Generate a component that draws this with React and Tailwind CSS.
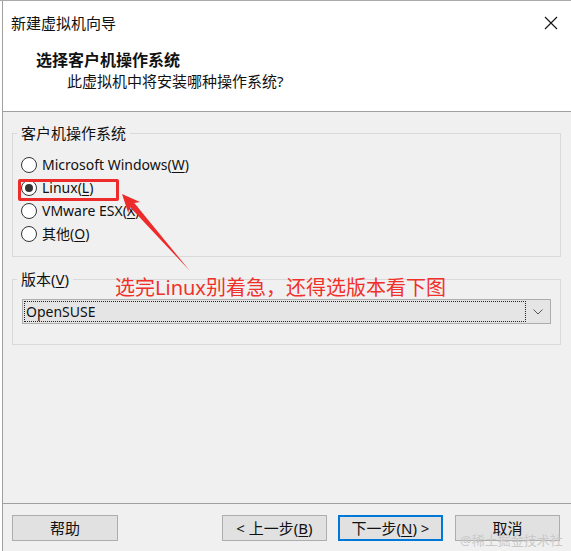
import React, { useState } from "react";

const OS_OPTIONS = [
  { id: "win", label: "Microsoft Windows(", key: "W" },
  { id: "linux", label: "Linux(", key: "L" },
  { id: "esx", label: "VMware ESX(", key: "X" },
  { id: "other", label: "其他(", key: "O" },
];

function Radio({ checked }) {
  return (
    <span className="flex h-[16px] w-[16px] shrink-0 items-center justify-center rounded-full border border-[#333] bg-white">
      {checked ? <span className="h-[8px] w-[8px] rounded-full bg-[#333]" /> : null}
    </span>
  );
}

function WinButton({ children, primary }) {
  return (
    <button
      type="button"
      className={`flex h-[26px] w-full items-center justify-center bg-[#e1e1e1] text-[15px] text-[#111] ${
        primary ? "border-2 border-[#0078d7]" : "border border-[#adadad]"
      }`}
    >
      {children}
    </button>
  );
}

export default function App() {
  const [os, setOs] = useState("linux");

  return (
    <div
      className="relative flex h-[551px] w-[571px] overflow-hidden border-t border-[#a9a9a9] bg-white text-[#111]"
      style={{ fontFamily: '"Noto Sans", "Noto Sans CJK SC", sans-serif' }}
    >
      <div className="ml-[2px] flex flex-1 flex-col border-l border-[#a0a0a0]">
        {/* title bar + header */}
        <div className="flex h-[43px] items-center justify-between pl-[8px] pr-[13px]">
          <span className="text-[15px] leading-5">新建虚拟机向导</span>
          <svg width="14" height="14" viewBox="0 0 14 14" className="text-[#111]">
            <path d="M1 1 L13 13 M13 1 L1 13" stroke="currentColor" strokeWidth="1.1" />
          </svg>
        </div>
        <div className="flex h-[68px] flex-col border-b border-[#a0a0a0] pl-[33px] pt-[6px]">
          <span className="text-[16px] font-bold leading-5">选择客户机操作系统</span>
          <span className="mt-[1px] pl-[31px] text-[15px] leading-5">此虚拟机中将安装哪种操作系统?</span>
        </div>

        {/* body */}
        <div className="flex flex-1 flex-col bg-[#f0f0f0] pl-[9px] pr-[10px] pt-[11px]">
          <fieldset className="border border-[#d9d9d9] pb-[11px] pl-[8px] pt-[10px]">
            <legend className="-ml-[4px] px-[4px] text-[15px] leading-5">客户机操作系统</legend>
            {OS_OPTIONS.map((opt) => (
              <label
                key={opt.id}
                className="flex h-[23px] cursor-default items-center gap-[5px] text-[14px]"
                onClick={() => setOs(opt.id)}
              >
                <Radio checked={os === opt.id} />
                <span>
                  {opt.label}
                  <span className="underline underline-offset-2">{opt.key}</span>)
                </span>
              </label>
            ))}
          </fieldset>

          <fieldset className="mt-[12px] border border-[#d9d9d9] pb-[20px] pl-[9px] pr-[9px] pt-[10px]">
            <legend className="-ml-[5px] px-[4px] text-[15px] leading-5">
              版本(<span className="underline underline-offset-2">V</span>)
            </legend>
            <div className="flex h-[25px] items-center border border-[#adadad] bg-[#e5e5e5] p-[1px]">
              <div className="flex h-full flex-1 items-center border border-dotted border-[#222] pl-[1px] text-[14px]">
                OpenSUSE
              </div>
              <div className="flex w-[23px] items-center justify-center">
                <svg width="10" height="6" viewBox="0 0 10 6">
                  <path d="M0.5 0.5 L5 5 L9.5 0.5" fill="none" stroke="#555" strokeWidth="1" />
                </svg>
              </div>
            </div>
          </fieldset>
        </div>

        {/* footer */}
        <div className="flex items-start border-t border-[#a0a0a0] bg-[#f0f0f0] pb-[10px] pl-[9px] pr-[11px] pt-[11px]">
          <div className="w-[106px]">
            <WinButton>帮助</WinButton>
          </div>
          <div className="ml-auto flex gap-[11px]">
            <div className="w-[105px]">
              <WinButton>
                &lt; 上一步(<span className="underline underline-offset-2">B</span>)
              </WinButton>
            </div>
            <div className="w-[105px]">
              <WinButton primary>
                下一步(<span className="underline underline-offset-2">N</span>) &gt;
              </WinButton>
            </div>
            <div className="ml-[1px] w-[105px]">
              <WinButton>取消</WinButton>
            </div>
          </div>
        </div>
      </div>

      {/* annotations */}
      <div className="pointer-events-none absolute left-[18px] top-[178px] h-[22px] w-[101px] rounded-[2px] border-[3px] border-[#ee2b2b]" />
      <svg className="pointer-events-none absolute left-0 top-0" width="571" height="551">
        <polygon
          points="122,193 128.2,211.7 129.9,206.1 190,270 134.3,202.1 140,200.9"
          fill="#ee2b2b"
        />
      </svg>
      <div className="pointer-events-none absolute left-[115px] top-[275px] text-[20px] leading-6 text-[#f0302a]">
        选完Linux别着急，还得选版本看下图
      </div>
      <div className="pointer-events-none absolute left-[460px] top-[531px] text-[13px] leading-4 text-[#c9c9c9]">
        @稀土掘金技术社区
      </div>
    </div>
  );
}
